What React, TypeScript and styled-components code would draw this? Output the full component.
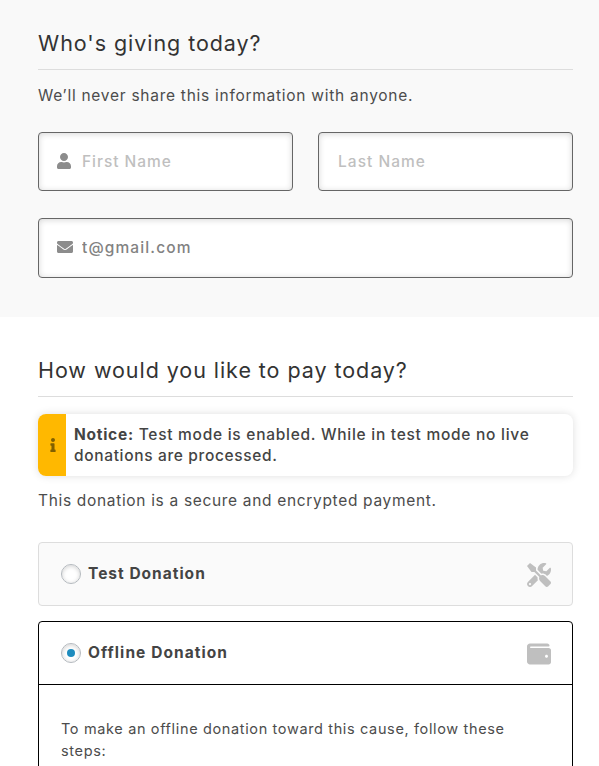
import React from "react";
import styled, { createGlobalStyle } from "styled-components";
import { FaUser, FaEnvelope, FaInfo, FaTools, FaWallet } from "react-icons/fa";

const GlobalStyle = createGlobalStyle`
  *, *::before, *::after { box-sizing: border-box; }
  html, body { margin: 0; }
  body {
    background: #fff;
    color: #4c4c4c;
    font-family: Inter, "Open Sans", sans-serif;
    font-size: 15.5px;
  }
`;

const Page = styled.main`
  height: 766px;
  overflow: hidden;
`;

const Section = styled.section<{ $tinted?: boolean }>`
  height: ${(p) => (p.$tinted ? "317px" : "449px")};
  overflow: hidden;
  padding: ${(p) => (p.$tinted ? "27px" : "37px")} 26px 0 38px;
  background: ${(p) => (p.$tinted ? "#f9f9f9" : "#fff")};
`;

const Title = styled.h2<{ $spacing: number }>`
  height: 43px;
  margin: 0;
  border-bottom: 1px solid #ddd;
  color: #333;
  font-size: 21.5px;
  font-weight: 400;
  line-height: 33px;
  letter-spacing: ${(p) => p.$spacing}px;
  white-space: nowrap;
`;

const Copy = styled.p<{ $spacing: number; $tight?: boolean }>`
  margin: ${(p) => (p.$tight ? "14px" : "15px")} 0 0;
  line-height: 22px;
  letter-spacing: ${(p) => p.$spacing}px;
  white-space: nowrap;
`;

const FieldGrid = styled.div`
  display: grid;
  grid-template-columns: repeat(2, minmax(0, 1fr));
  grid-template-rows: 59px 60px;
  gap: 27px 25px;
  margin-top: 25px;
`;

const Field = styled.label<{ $wide?: boolean; $bare?: boolean }>`
  grid-column: ${(p) => (p.$wide ? "1 / -1" : "auto")};
  display: flex;
  align-items: center;
  padding-left: ${(p) => (p.$bare ? "19px" : "18px")};
  padding-bottom: ${(p) => (p.$wide ? "2px" : "0")};
  border: 1px solid #666;
  border-radius: 4px;
  background: #fff;
  box-shadow: inset 0 1px 6px rgba(0, 0, 0, 0.16);
  color: #8c8c8c;

  svg {
    flex: none;
    margin-right: 9px;
  }
  svg.person {
    width: 14px;
    margin: -1px 11px 0 0;
  }
`;

const Input = styled.input<{ $spacing: number }>`
  flex: 1;
  min-width: 0;
  height: 30px;
  padding: 0;
  border: 0;
  outline: 0;
  background: transparent;
  color: #828282;
  font: 500 15.5px Inter, sans-serif;
  letter-spacing: ${(p) => p.$spacing}px;

  &::placeholder {
    color: #bfbfbf;
    opacity: 1;
  }
`;

const Notice = styled.div`
  display: flex;
  height: 62px;
  margin-top: 17px;
  overflow: hidden;
  border-radius: 8px;
  background: #fff;
  box-shadow: 0 0 8px rgba(0, 0, 0, 0.13);
`;

const NoticeMark = styled.div`
  display: flex;
  flex: 0 0 28px;
  align-items: center;
  justify-content: center;
  padding-left: 1px;
  background: #ffb800;
  color: #806000;
`;

const NoticeText = styled.p`
  margin: 0;
  padding: 10px 0 0 8px;
  color: #444;
  font-weight: 500;
  line-height: 21px;
  letter-spacing: 0.73px;
  white-space: nowrap;
`;

const NoticeEnd = styled.span`
  letter-spacing: 0.655px;
`;

const Gateways = styled.div`
  display: grid;
  gap: 15px;
  margin-top: 30px;
`;

const Gateway = styled.div<{ $active?: boolean }>`
  border: 1px solid ${(p) => (p.$active ? "#000" : "#ddd")};
  border-radius: 4px;
  background: ${(p) => (p.$active ? "#fff" : "#fafafa")};
`;

const GatewayHead = styled.label`
  display: flex;
  align-items: center;
  height: 62px;
  padding: 0 21px 0 22px;

  svg {
    flex: none;
    margin: 2px 0 0 auto;
    color: #bfbfbf;
  }
`;

const Radio = styled.span`
  display: grid;
  flex: none;
  place-items: center;
  width: 20px;
  height: 20px;
  margin: 0 7px 0 0;
  border: 1px solid #b4b9be;
  border-radius: 50%;
  background: #fff;
  box-shadow: inset 0 1px 4px rgba(0, 0, 0, 0.18);
`;

const Dot = styled.span`
  width: 8px;
  height: 8px;
  border-radius: 50%;
  background: #1e8cbe;
`;

const GatewayName = styled.span<{ $spacing: number }>`
  margin-top: -2px;
  color: #444;
  font-weight: 700;
  letter-spacing: ${(p) => p.$spacing}px;
`;

const Instructions = styled.div`
  height: 150px;
  padding: 33px 22px 0;
  border-top: 1px solid #000;
  font-size: 14.5px;
  line-height: 22px;
  letter-spacing: 0.64px;
`;

export default function App() {
  return (
    <Page>
      <GlobalStyle />
      <Section $tinted>
        <Title $spacing={0.94}>Who's giving today?</Title>
        <Copy $spacing={0.735}>We’ll never share this information with anyone.</Copy>
        <FieldGrid>
          <Field>
            <FaUser className="person" size={16} />
            <Input $spacing={0.95} placeholder="First Name" />
          </Field>
          <Field $bare>
            <Input $spacing={1.03} placeholder="Last Name" />
          </Field>
          <Field $wide>
            <FaEnvelope size={16} />
            <Input $spacing={1.12} defaultValue="t@gmail.com" />
          </Field>
        </FieldGrid>
      </Section>
      <Section>
        <Title $spacing={0.94}>How would you like to pay today?</Title>
        <Notice>
          <NoticeMark>
            <FaInfo size={14} />
          </NoticeMark>
          <NoticeText>
            <strong>Notice:</strong> Test mode is enabled. While in test mode no live
            <br />
            <NoticeEnd>donations are processed.</NoticeEnd>
          </NoticeText>
        </Notice>
        <Copy $tight $spacing={0.674}>
          This donation is a secure and encrypted payment.
        </Copy>
        <Gateways>
          <Gateway>
            <GatewayHead>
              <Radio />
              <GatewayName $spacing={1.0}>Test Donation</GatewayName>
              <FaTools size={24} />
            </GatewayHead>
          </Gateway>
          <Gateway $active>
            <GatewayHead>
              <Radio>
                <Dot />
              </Radio>
              <GatewayName $spacing={1.07}>Offline Donation</GatewayName>
              <FaWallet size={24} />
            </GatewayHead>
            <Instructions>
              To make an offline donation toward this cause, follow these steps:
            </Instructions>
          </Gateway>
        </Gateways>
      </Section>
    </Page>
  );
}
